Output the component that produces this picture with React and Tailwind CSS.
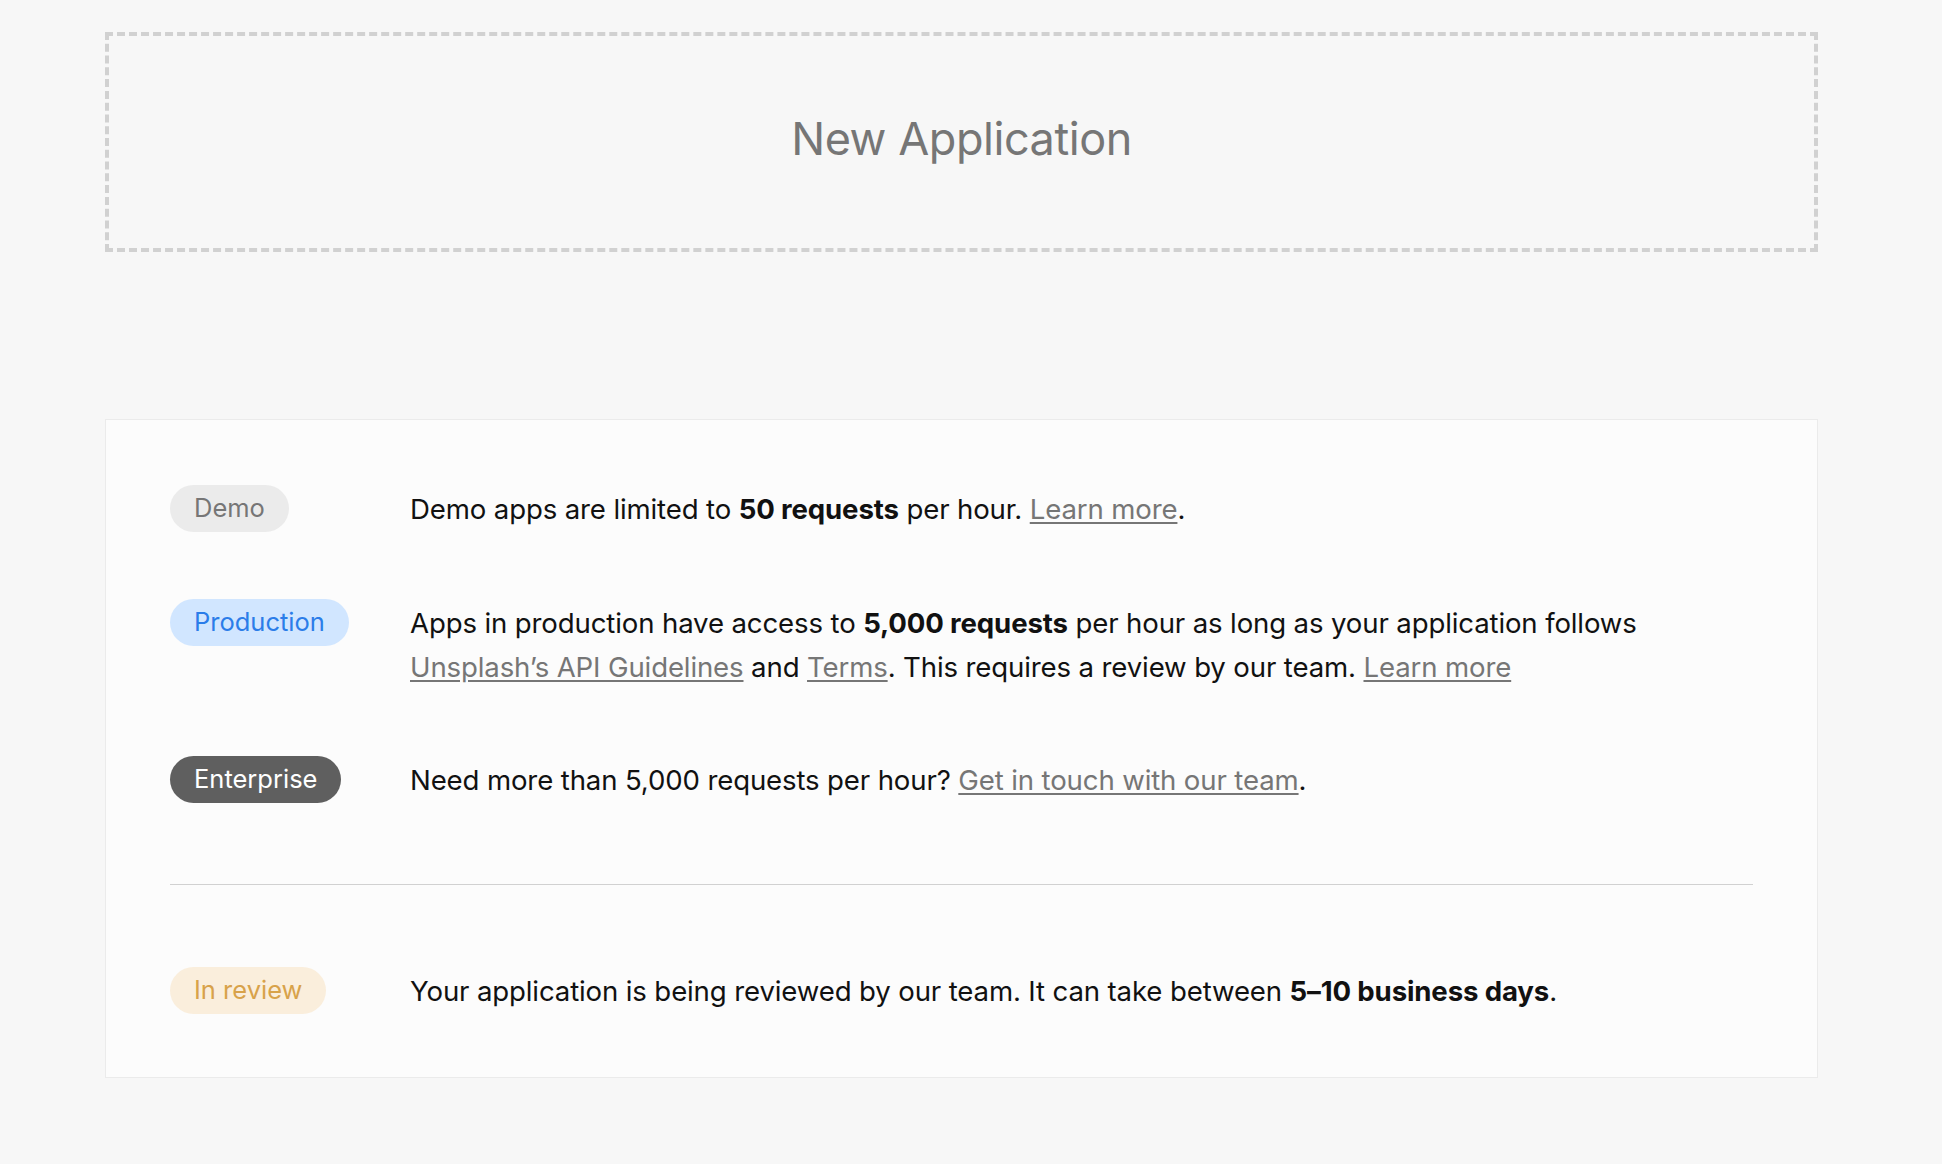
export default function App() {
  const rows = [
    {
      label: 'Demo',
      badge: 'bg-[#ebebeb] text-[#767676]',
      body: (
        <>
          Demo apps are limited to <b className="font-bold">50 requests</b> per hour.{' '}
          <a href="#" className="text-[#767676] underline underline-offset-[3px]">Learn more</a>.
        </>
      ),
    },
    {
      label: 'Production',
      badge: 'bg-[#d1e6ff] text-[#2b7de9]',
      body: (
        <>
          Apps in production have access to <b className="font-bold">5,000 requests</b> per hour as long as your application follows{' '}
          <a href="#" className="text-[#767676] underline underline-offset-[3px]">Unsplash’s API Guidelines</a> and{' '}
          <a href="#" className="text-[#767676] underline underline-offset-[3px]">Terms</a>. This requires a review by our team.{' '}
          <a href="#" className="text-[#767676] underline underline-offset-[3px]">Learn more</a>
        </>
      ),
    },
    {
      label: 'Enterprise',
      badge: 'bg-[#5f5f5f] text-white',
      body: (
        <>
          Need more than 5,000 requests per hour?{' '}
          <a href="#" className="text-[#767676] underline underline-offset-[3px]">Get in touch with our team</a>.
        </>
      ),
    },
  ];

  return (
    <div className="min-h-screen bg-[#f7f7f7] pt-[32px] pl-[105px] font-['Inter',sans-serif] text-[#111111]">
      <div className="w-[1713px]">
        {/* New application placeholder */}
        <div className="h-[220px] border-4 border-dashed border-[#d1d1d1] flex items-center justify-center">
          <span className="text-[45px] text-[#767676] tracking-[-0.01em] -mt-[6px]">New Application</span>
        </div>

        {/* Plans */}
        <div className="mt-[167px] bg-[#fcfcfc] border border-[#ebebeb] px-[64px] pt-[67px] pb-[63px]">
          <div className="flex flex-col gap-[69px]">
            {rows.map((row) => (
              <div key={row.label} className="flex items-start">
                <div className="w-[240px] shrink-0">
                  <span className={`inline-flex items-center h-[47px] -mt-[2px] px-6 rounded-full text-[25.5px] ${row.badge}`}>
                    {row.label}
                  </span>
                </div>
                <p className="text-[27.6px] leading-[44px] tracking-[-0.005em] max-w-[1330px]">{row.body}</p>
              </div>
            ))}
          </div>

          <div className="mt-[81px] mb-[84px] h-px bg-[#d1d1d1]" />

          <div className="flex items-start">
            <div className="w-[240px] shrink-0">
              <span className="inline-flex items-center h-[47px] -mt-[2px] px-6 rounded-full text-[25.5px] bg-[#faeedc] text-[#d8a24a]">
                In review
              </span>
            </div>
            <p className="text-[27.6px] leading-[44px] tracking-[-0.005em]">
              Your application is being reviewed by our team. It can take between{' '}
              <b className="font-bold">5–10 business days</b>.
            </p>
          </div>
        </div>
      </div>
    </div>
  );
}
